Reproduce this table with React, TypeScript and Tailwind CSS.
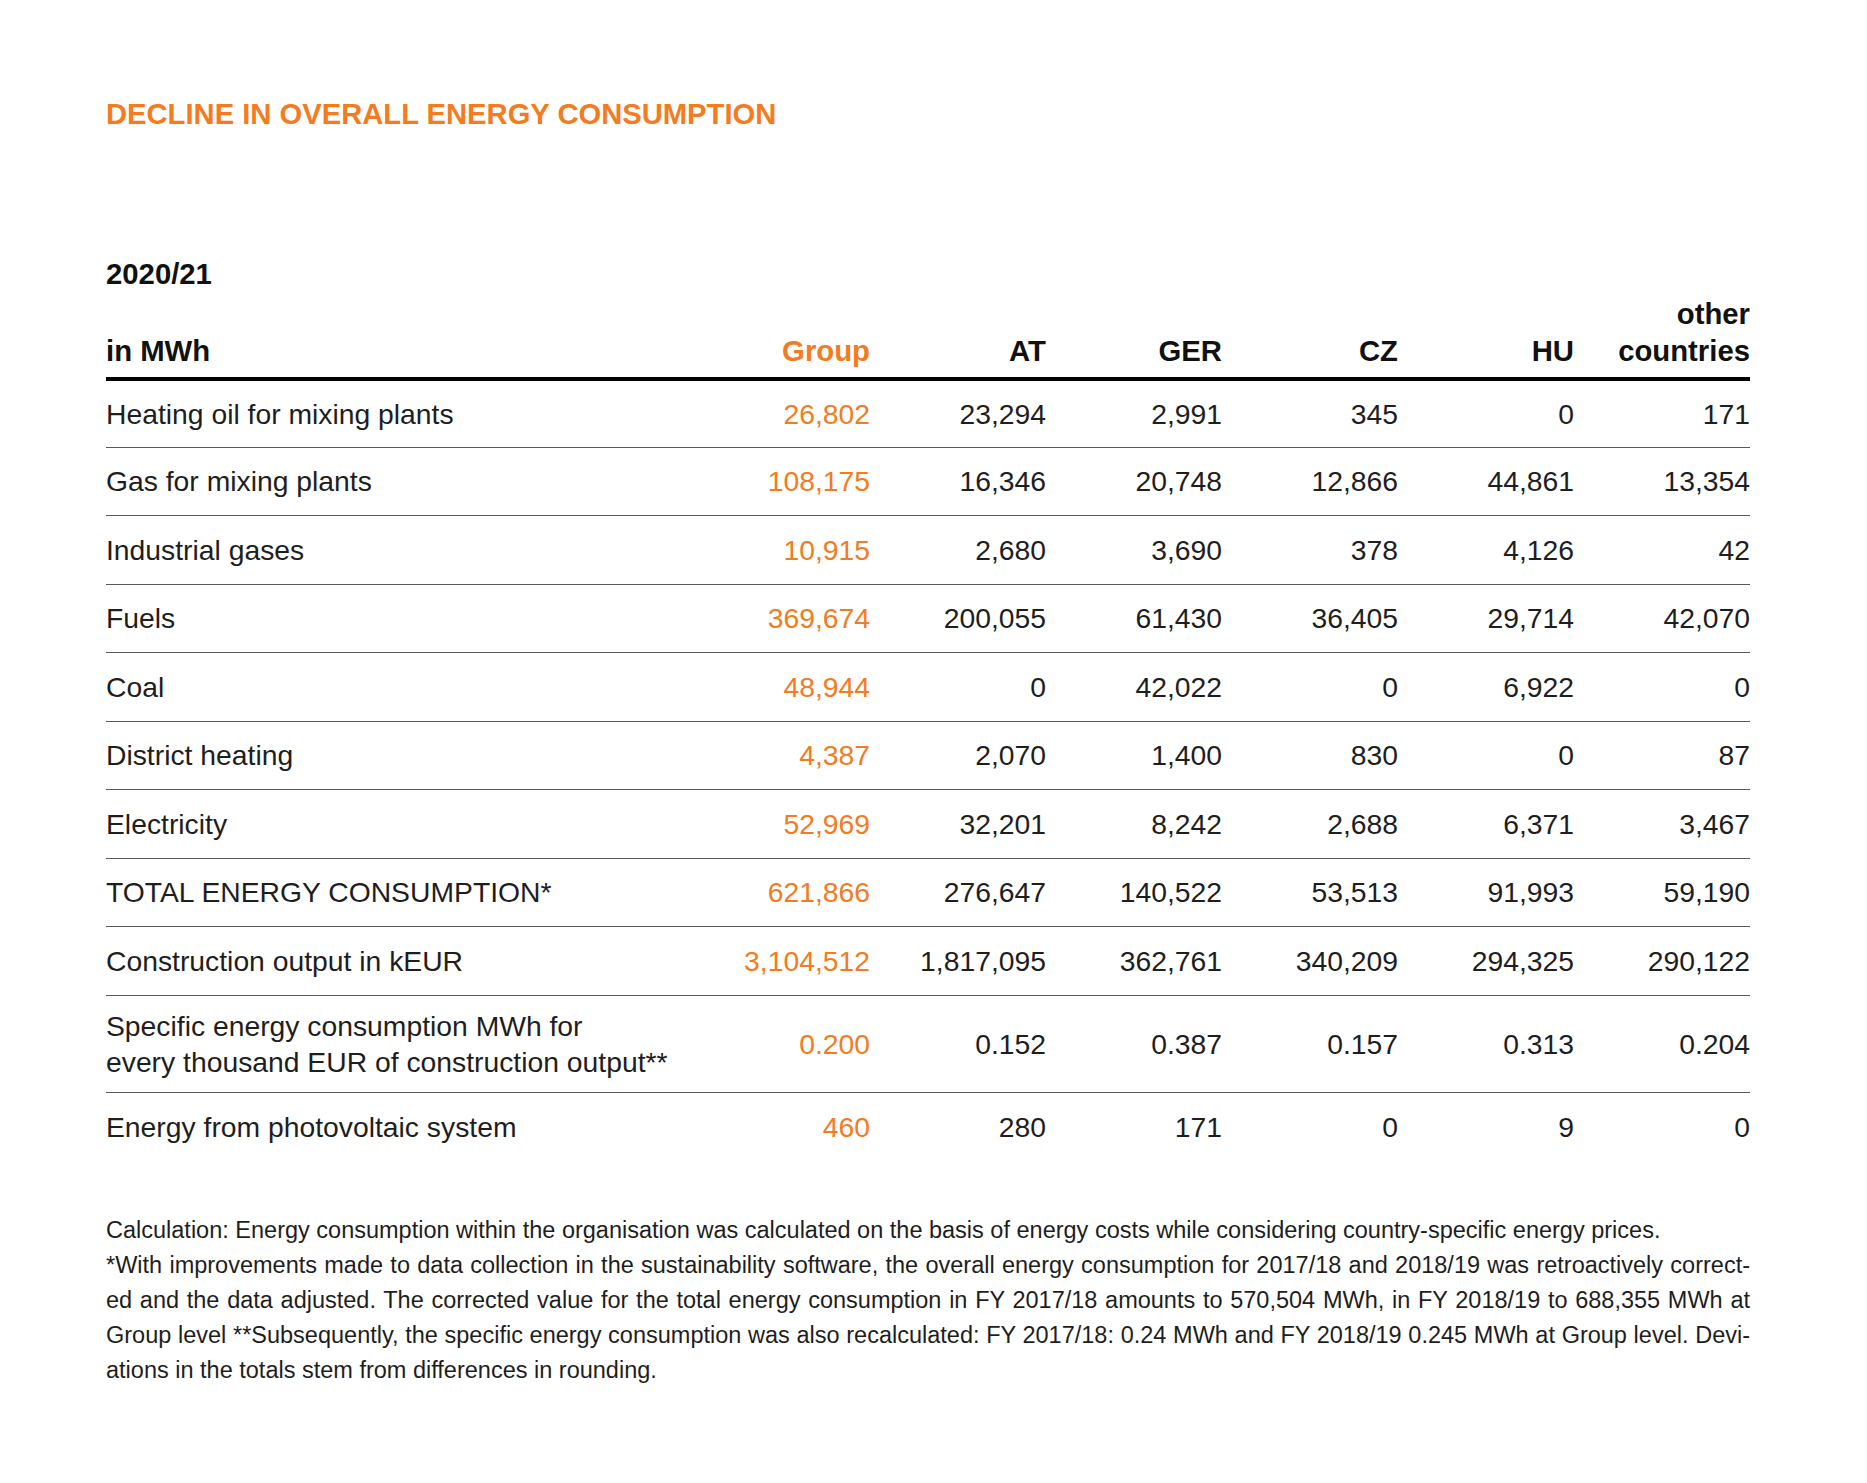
const COLS = ["Group", "AT", "GER", "CZ", "HU"];

type Row = { label: string[]; values: string[] };

const ROWS: Row[] = [
  { label: ["Heating oil for mixing plants"], values: ["26,802", "23,294", "2,991", "345", "0", "171"] },
  { label: ["Gas for mixing plants"], values: ["108,175", "16,346", "20,748", "12,866", "44,861", "13,354"] },
  { label: ["Industrial gases"], values: ["10,915", "2,680", "3,690", "378", "4,126", "42"] },
  { label: ["Fuels"], values: ["369,674", "200,055", "61,430", "36,405", "29,714", "42,070"] },
  { label: ["Coal"], values: ["48,944", "0", "42,022", "0", "6,922", "0"] },
  { label: ["District heating"], values: ["4,387", "2,070", "1,400", "830", "0", "87"] },
  { label: ["Electricity"], values: ["52,969", "32,201", "8,242", "2,688", "6,371", "3,467"] },
  { label: ["TOTAL ENERGY CONSUMPTION*"], values: ["621,866", "276,647", "140,522", "53,513", "91,993", "59,190"] },
  { label: ["Construction output in kEUR"], values: ["3,104,512", "1,817,095", "362,761", "340,209", "294,325", "290,122"] },
  {
    label: ["Specific energy consumption MWh for", "every thousand EUR of construction output**"],
    values: ["0.200", "0.152", "0.387", "0.157", "0.313", "0.204"],
  },
  { label: ["Energy from photovoltaic system"], values: ["460", "280", "171", "0", "9", "0"] },
];

const NOTES = [
  "Calculation: Energy consumption within the organisation was calculated on the basis of energy costs while considering country-specific energy prices.",
  "*With improvements made to data collection in the sustainability software, the overall energy consumption for 2017/18 and 2018/19 was retroactively correct-",
  "ed and the data adjusted. The corrected value for the total energy consumption in FY 2017/18 amounts to 570,504 MWh, in FY 2018/19 to 688,355 MWh at",
  "Group level **Subsequently, the specific energy consumption was also recalculated: FY 2017/18: 0.24 MWh and FY 2018/19 0.245 MWh at Group level. Devi-",
  "ations in the totals stem from differences in rounding.",
];

const GRID = "grid grid-cols-[588px_repeat(6,176px)]";

export default function App() {
  return (
    <div className="min-h-screen bg-white text-[#1e1e1e] font-['Liberation_Sans',Arial,sans-serif]">
      <div className="w-[1644px] ml-[106px] pt-[97px]">
        <h1 className="text-[29.2px] leading-[35px] font-bold text-[#f47b20]">
          DECLINE IN OVERALL ENERGY CONSUMPTION
        </h1>

        <div className="mt-[123px] text-[29.3px] leading-[37px] font-bold text-[#111]">2020/21</div>

        <div
          className={`${GRID} mt-[3px] items-end pb-[8px] border-b-4 border-black text-[29.3px] leading-[37px] font-bold text-[#111]`}
        >
          <div>in MWh</div>
          {COLS.map((c, i) => (
            <div key={c} className={`text-right ${i === 0 ? "text-[#f47b20]" : ""}`}>
              {c}
            </div>
          ))}
          <div className="text-right">
            other
            <br />
            countries
          </div>
        </div>

        {ROWS.map((row, idx) => (
          <div
            key={idx}
            className={`${GRID} items-center text-[28.3px] ${
              row.label.length > 1
                ? "h-[97px] leading-[36px]"
                : idx === 0
                  ? "h-[66.5px] leading-[34px]"
                  : "h-[68.5px] leading-[34px]"
            } ${idx < ROWS.length - 1 ? "border-b border-[#5a5a5a]" : ""}`}
          >
            <div>
              {row.label.map((l) => (
                <div key={l}>{l}</div>
              ))}
            </div>
            {row.values.map((v, i) => (
              <div key={i} className={`text-right ${i === 0 ? "text-[#f47b20]" : ""}`}>
                {v}
              </div>
            ))}
          </div>
        ))}

        <div className="mt-[52px] text-[23.5px] leading-[35px]">
          {NOTES.map((n, i) => (
            <div
              key={i}
              className={i > 0 && i < NOTES.length - 1 ? "text-justify [text-align-last:justify]" : ""}
            >
              {n}
            </div>
          ))}
        </div>
      </div>
    </div>
  );
}
